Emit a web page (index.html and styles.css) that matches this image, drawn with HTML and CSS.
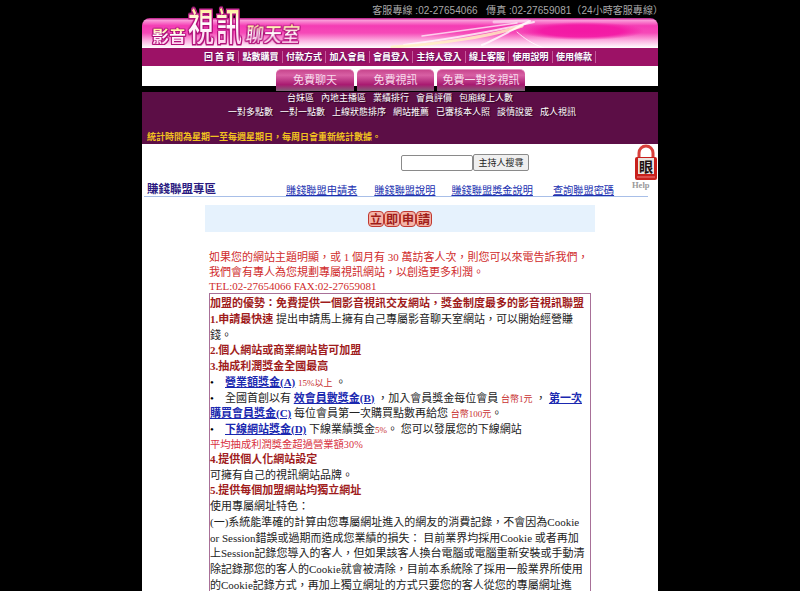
FILE: index.html
```html
<!DOCTYPE html>
<html lang="zh-Hant">
<head>
    <meta charset="UTF-8">
    <title>賺錢聯盟專區</title>
    <link rel="stylesheet" href="styles.css">
</head>
<body>
<div class="page">
    <div class="topbar">客服專線 :02-27654066 &nbsp; 傳真 :02-27659081（24小時客服專線）</div>
    <div class="banner">
        <svg class="streaks" width="516" height="30" viewBox="0 0 516 30">
            <g fill="none" stroke-linecap="round">
                <path d="M262 27C300 22 340 16 392 4" stroke="#fff" stroke-width="2" opacity=".75"/>
                <path d="M250 29C300 26 350 18 380 8" stroke="#fff4c0" stroke-width="3" opacity=".8"/>
                <path d="M280 18C310 14 340 10 375 5" stroke="#fff" stroke-width="1.5" opacity=".7"/>
                <path d="M340 27C352 22 370 12 388 3" stroke="#fff" stroke-width="2" opacity=".8"/>
                <path d="M375 14C382 20 390 26 402 30" stroke="#fff" stroke-width="1" opacity=".8"/>
                <path d="M352 4L386 3" stroke="#fff" stroke-width="3" opacity=".5"/>
            </g>
        </svg>
        <div class="logo">
            <span class="logo-sm">影音</span>
            <span class="logo-lg">視訊</span>
            <span class="logo-md">聊天室</span>
        </div>
    </div>
    <div class="nav">
        <a>回 首 頁</a><a>點數購買</a><a>付款方式</a><a>加入會員</a><a>會員登入</a><a>主持人登入</a><a>線上客服</a><a>使用說明</a><a>使用條款</a>
    </div>
    <div class="tabrow">
        <a class="tab tab-a">免費聊天</a>
        <a class="tab tab-b">免費視訊</a>
        <a class="tab tab-c">免費一對多視訊</a>
    </div>
    <div class="subnav">
        <div class="subrow"><a>台妹區</a><a>內地主播區</a><a>業績排行</a><a>會員評價</a><a>包廂線上人數</a></div>
        <div class="subrow"><a>一對多點數</a><a>一對一點數</a><a>上線狀態排序</a><a>網站推薦</a><a>已審核本人照</a><a>談情說愛</a><a>成人視訊</a></div>
        <div class="notice">統計時間為星期一至每週星期日，每周日會重新統計數據。</div>
    </div>
    <div class="main">
        <div class="help">
            <svg width="24" height="36" viewBox="0 0 24 36">
                <path d="M5 15V9a7 7 0 0 1 14 0v6" fill="#fff" stroke="#d8403c" stroke-width="3"/>
                <rect x="1" y="13" width="22" height="23" rx="2" fill="#c8201c"/>
                <rect x="4" y="14" width="16" height="16" fill="#e8e4e0"/>
                <path d="M3 33h18" stroke="#f08080" stroke-width="1"/>
            </svg>
            <span class="help-eye">眼</span>
            <span class="help-text">Help</span>
        </div>
        <div class="search">
            <input class="search-input" type="text">
            <button class="search-btn">主持人搜尋</button>
        </div>
        <div class="section-head">
            <div class="section-title">賺錢聯盟專區</div>
            <a class="l1">賺錢聯盟申請表</a>
            <a class="l2">賺錢聯盟說明</a>
            <a class="l3">賺錢聯盟獎金說明</a>
            <a class="l4">查詢聯盟密碼</a>
        </div>
        <div class="apply-head"><span>立</span><span>即</span><span>申</span><span>請</span></div>
        <div class="intro">
            如果您的網站主題明顯，或 1 個月有 30 萬訪客人次，則您可以來電告訴我們，<br>
            我們會有專人為您規劃專屬視訊網站，以創造更多利潤。<br>
            TEL:02-27654066 FAX:02-27659081
        </div>
        <div class="box">
            <div class="hd">加盟的優勢：免費提供一個影音視訊交友網站，獎金制度最多的影音視訊聯盟</div>
            <div><b class="red">1.申請最快速</b> 提出申請馬上擁有自己專屬影音聊天室網站，可以開始經營賺錢。</div>
            <div class="hd">2.個人網站或商業網站皆可加盟</div>
            <div class="hd">3.抽成利潤獎金全國最高</div>
            <div><span class="dot">•</span><a class="lnk">營業額獎金(A)</a> <span class="small">15%以上</span> 。</div>
            <div><span class="dot">•</span>全國首創以有 <a class="lnk">效會員數獎金(B)</a> ，加入會員獎金每位會員 <span class="small">台幣1元</span> ， <a class="lnk">第一次購買會員獎金(C)</a> 每位會員第一次購買點數再給您 <span class="small">台幣100元</span>。</div>
            <div><span class="dot">•</span><a class="lnk">下線網站獎金(D)</a> 下線業績獎金<span class="small">5%</span>。 您可以發展您的下線網站</div>
            <div class="pink">平均抽成利潤獎金超過營業額30%</div>
            <div class="hd">4.提供個人化網站設定</div>
            <div>可擁有自己的視訊網站品牌。</div>
            <div class="hd">5.提供每個加盟網站均獨立網址</div>
            <div>使用專屬網址特色：</div>
            <div>(一)系統能準確的計算由您專屬網址進入的網友的消費記錄，不會因為Cookie or Session錯誤或過期而造成您業績的損失： 目前業界均採用Cookie 或者再加上Session記錄您導入的客人，但如果該客人換台電腦或電腦重新安裝或手動清除記錄那您的客人的Cookie就會被清除，目前本系統除了採用一般業界所使用的Cookie記錄方式，再加上獨立網址的方式只要您的客人從您的專屬網址進</div>
        </div>
    </div>
</div>
</body>
</html>
```

FILE: styles.css
```css
html, body {
    margin: 0;
    height: 100%;
    overflow: hidden;
    background: #000;
}
body {
    font-family: "Liberation Serif", "Noto Sans CJK TC", serif;
}
a {
    cursor: pointer;
}
.page {
    width: 516px;
    margin: 0 auto;
}
.topbar {
    height: 18px;
    line-height: 21px;
    font-family: "Liberation Sans", "Noto Sans CJK TC", sans-serif;
    font-size: 10px;
    letter-spacing: 0.05px;
    color: #a8a8a8;
    text-align: right;
    white-space: nowrap;
    margin-right: -5px;
}
.banner {
    height: 30px;
    border-radius: 8px 8px 0 0;
    position: relative;
    background:
        radial-gradient(ellipse 62px 9px at 440px 13px, #f318a4 0, rgba(243, 24, 164, 0.9) 65%, rgba(243, 24, 164, 0) 100%),
        linear-gradient(#b81484 0, #fa9ad8 8%, #f43cb4 26%, #f64ab8 50%, #fcb4e2 76%, #fff 100%);
}
.streaks {
    position: absolute;
    left: 0;
    top: 0;
}
.logo {
    position: absolute;
    left: 10px;
    bottom: 4px;
    display: flex;
    align-items: flex-end;
    font-family: "Noto Sans CJK TC", sans-serif;
    white-space: nowrap;
}
.logo span {
    display: block;
    transform-origin: left bottom;
    background: linear-gradient(#ffe878 0, #fff 45%, #ffd0ee 100%);
    -webkit-background-clip: text;
    background-clip: text;
    color: transparent;
    filter: drop-shadow(1px 0 0 #b01078) drop-shadow(-1px 0 0 #b01078) drop-shadow(0 1px 0 #b01078) drop-shadow(0 -1px 0 #d0309c);
}
.logo-sm {
    font-size: 17px;
    line-height: 17px;
    font-weight: 700;
    width: 36px;
}
.logo-lg {
    font-size: 26px;
    line-height: 26px;
    font-weight: 500;
    width: 57px;
    transform: scaleY(1.5);
    letter-spacing: 2px;
}
.logo-md {
    font-size: 18px;
    line-height: 18px;
    font-weight: 500;
    margin-bottom: 1px;
    transform: skewX(-6deg) scaleY(1.1);
}
.nav {
    height: 18px;
    background: #9c1266;
    display: flex;
    justify-content: center;
    align-items: center;
    font-family: "Noto Sans CJK TC", sans-serif;
    font-size: 9px;
    font-weight: 700;
    color: #fff;
    text-shadow: 1px 1px 1px #5a1060;
    padding-right: 3px;
}
.nav a {
    padding: 0 3.25px;
    border-right: 1px solid #c45a9c;
    line-height: 12px;
}
.tabrow {
    height: 26px;
    background: linear-gradient(#fff 0, #fff 20px, #000 20px);
    display: flex;
    padding-left: 134px;
    gap: 3px;
    box-sizing: border-box;
    padding-top: 3px;
}
.tab {
    height: 22px;
    box-sizing: border-box;
    border-radius: 5px 5px 0 0;
    background: linear-gradient(#c8468e 0, #d860a4 25%, #a81a70 70%, #806078 100%);
    color: #f8dcec;
    font-family: "Noto Sans CJK TC", sans-serif;
    font-size: 11px;
    line-height: 18px;
    text-align: center;
    border-top: 1px solid #e890c0;
}
.tab-a {
    width: 78px;
}
.tab-b {
    width: 77px;
}
.tab-c {
    width: 88px;
}
.subnav {
    height: 52px;
    background: #5c0e46;
    font-family: "Noto Sans CJK TC", sans-serif;
    font-size: 9px;
    color: #fff;
}
.subrow {
    display: flex;
    justify-content: center;
    gap: 7px;
    height: 14px;
    line-height: 12px;
    text-shadow: 1px 1px 1px #2a0420;
}
.subrow + .subrow {
    padding-left: 4px;
}
.notice {
    margin-top: 11px;
    padding-left: 5px;
    color: #f0c020;
    font-weight: 700;
    line-height: 12px;
}
.main {
    background: #fff;
    height: 460px;
    position: relative;
}
.help {
    position: absolute;
    right: 0;
    top: 0;
    width: 24px;
    text-align: center;
}
.help svg {
    display: block;
}
.help-eye {
    position: absolute;
    left: 4px;
    top: 14px;
    width: 16px;
    text-align: center;
    font-family: "Noto Sans CJK TC", sans-serif;
    font-size: 14px;
    line-height: 16px;
    font-weight: 700;
    color: #201010;
}
.help-text {
    display: block;
    position: absolute;
    left: -2px;
    top: 36px;
    font-size: 8.5px;
    line-height: 11px;
    color: #999;
    font-weight: 700;
}
.search {
    display: flex;
    padding: 10px 0 0 259px;
    height: 26px;
    box-sizing: border-box;
    align-items: flex-start;
}
.search-input {
    width: 72px;
    height: 16px;
    box-sizing: border-box;
    border: 1px solid #8a8a8a;
    border-radius: 2px;
    padding: 0;
    margin: 1px 0 0;
}
.search-btn {
    width: 56px;
    height: 17px;
    box-sizing: border-box;
    padding: 0;
    border: 1px solid #8a8a8a;
    border-radius: 2px;
    background: #efefef;
    font-family: "Noto Sans CJK TC", sans-serif;
    font-size: 9px;
    line-height: 14px;
    color: #222;
}
.section-head {
    display: flex;
    align-items: flex-end;
    height: 27px;
    margin: 0 10px 0 2px;
    padding-left: 3px;
    box-sizing: border-box;
    border-bottom: 1px solid #a8bfe8;
    white-space: nowrap;
    font-family: "Noto Sans CJK TC", sans-serif;
}
.section-title {
    width: 139px;
    font-size: 11.5px;
    font-weight: 700;
    color: #2a1a80;
    line-height: 14px;
    margin-bottom: 1px;
}
.section-head a {
    font-size: 10.2px;
    line-height: 12px;
    color: #2030b0;
    text-decoration: underline;
}
.l2 {
    margin-left: 17px;
}
.l3 {
    margin-left: 16px;
}
.l4 {
    margin-left: 20px;
}
.apply-head {
    margin: 8px 63px 0;
    height: 27px;
    background: #e6f2fd;
    display: flex;
    justify-content: center;
    align-items: center;
}
.apply-head span {
    width: 16px;
    height: 16px;
    box-sizing: border-box;
    border: 1px solid #c03830;
    border-radius: 4px;
    background: #f4b4a8;
    color: #a01c18;
    font-family: "Noto Sans CJK TC", sans-serif;
    font-weight: 700;
    font-size: 12px;
    line-height: 14px;
    text-align: center;
}
.intro {
    margin: 18px 0 0 67px;
    height: 43px;
    font-size: 11px;
    line-height: 14.6px;
    color: #d02c2c;
    white-space: nowrap;
}
.box {
    margin-left: 67px;
    width: 382px;
    box-sizing: border-box;
    border: 1px solid #a87098;
    padding: 2px 1px 0 0;
    font-size: 11px;
    line-height: 15.75px;
    color: #222;
}
.hd,
.red {
    font-weight: 700;
    color: #a01c1c;
}
.dot {
    display: inline-block;
    width: 15px;
    color: #000;
    line-height: 1;
}
.lnk {
    font-weight: 700;
    color: #1a28b0;
    text-decoration: underline;
}
.small {
    font-size: 9px;
    line-height: 1;
    color: #c83030;
}
.pink {
    color: #d83040;
    font-size: 10.3px;
    line-height: 14px;
}
```
